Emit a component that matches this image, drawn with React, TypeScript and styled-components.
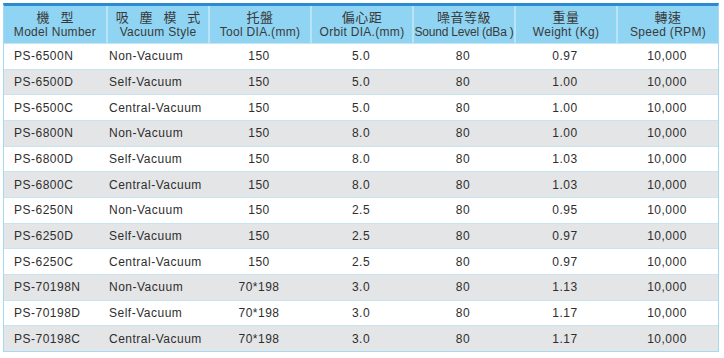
import React from "react";
import styled, { createGlobalStyle } from "styled-components";

const GlobalStyle = createGlobalStyle`
  body {
    margin: 0;
    background: #ffffff;
    font-family: "Liberation Sans", Arial, sans-serif;
  }
`;

const Page = styled.div`
  padding: 3px 0 0 3px;
`;

const Table = styled.div`
  width: 716px;
  box-sizing: border-box;
  border-top: 3px solid #2b8bd2;
  border-left: 1px solid #a4daf2;
  border-right: 1px solid #a4daf2;
  border-bottom: 1px solid #a4daf2;
`;

const Row = styled.div<{ $shade?: boolean }>`
  display: grid;
  grid-template-columns: repeat(7, 1fr);
  height: 25.67px;
  align-items: center;
  background: ${(p) => (p.$shade ? "#e4e5e7" : "#ffffff")};
  border-top: 1px solid #c9e4f1;
  box-sizing: border-box;
  color: #2e2e2e;
  font-size: 12px;
  letter-spacing: 0.5px;
`;

const HeadRow = styled.div`
  display: grid;
  grid-template-columns: repeat(7, 1fr);
  height: 37px;
  background: #8fd4f3;
`;

const HeadCell = styled.div`
  display: flex;
  flex-direction: column;
  align-items: center;
  justify-content: center;
  border-left: 2px solid #b9e4f7;
  color: #3a3a3a;
  white-space: nowrap;
  &:first-child {
    border-left: none;
  }
`;

const Zh = styled.span<{ $wide?: boolean }>`
  display: block;
  height: 16px;
  line-height: 16px;
  font-family: "Noto Sans CJK TC", "Noto Sans CJK SC", sans-serif;
  font-size: 13px;
  letter-spacing: ${(p) => (p.$wide ? "4px" : "0.5px")};
  margin-right: ${(p) => (p.$wide ? "-4px" : "0")};
`;

const En = styled.span<{ $tight?: boolean }>`
  display: block;
  height: 15px;
  line-height: 15px;
  font-size: 12px;
  letter-spacing: ${(p) => (p.$tight ? "-0.2px" : "0.3px")};
`;

const Cell = styled.div<{ $pad?: number }>`
  white-space: nowrap;
  text-align: ${(p) => (p.$pad !== undefined ? "left" : "center")};
  padding-left: ${(p) => p.$pad ?? 0}px;
`;

const heads = [
  { zh: "機 型", en: "Model Number", wide: true },
  { zh: "吸 塵 模 式", en: "Vacuum Style", wide: true },
  { zh: "托盤", en: "Tool DIA.(mm)" },
  { zh: "偏心距", en: "Orbit DIA.(mm)" },
  { zh: "噪音等級", en: "Sound Level (dBa )", tight: true },
  { zh: "重量", en: "Weight (Kg)" },
  { zh: "轉速", en: "Speed (RPM)" },
];

const rows = [
  ["PS-6500N", "Non-Vacuum", "150", "5.0", "80", "0.97", "10,000"],
  ["PS-6500D", "Self-Vacuum", "150", "5.0", "80", "1.00", "10,000"],
  ["PS-6500C", "Central-Vacuum", "150", "5.0", "80", "1.00", "10,000"],
  ["PS-6800N", "Non-Vacuum", "150", "8.0", "80", "1.00", "10,000"],
  ["PS-6800D", "Self-Vacuum", "150", "8.0", "80", "1.03", "10,000"],
  ["PS-6800C", "Central-Vacuum", "150", "8.0", "80", "1.03", "10,000"],
  ["PS-6250N", "Non-Vacuum", "150", "2.5", "80", "0.95", "10,000"],
  ["PS-6250D", "Self-Vacuum", "150", "2.5", "80", "0.97", "10,000"],
  ["PS-6250C", "Central-Vacuum", "150", "2.5", "80", "0.97", "10,000"],
  ["PS-70198N", "Non-Vacuum", "70*198", "3.0", "80", "1.13", "10,000"],
  ["PS-70198D", "Self-Vacuum", "70*198", "3.0", "80", "1.17", "10,000"],
  ["PS-70198C", "Central-Vacuum", "70*198", "3.0", "80", "1.17", "10,000"],
];

const pads = [10, 3];

export default function App() {
  return (
    <Page>
      <GlobalStyle />
      <Table>
        <HeadRow>
          {heads.map((h) => (
            <HeadCell key={h.en}>
              <Zh $wide={h.wide}>{h.zh}</Zh>
              <En $tight={h.tight}>{h.en}</En>
            </HeadCell>
          ))}
        </HeadRow>
        {rows.map((r, i) => (
          <Row key={r[0]} $shade={i % 2 === 1}>
            {r.map((v, j) => (
              <Cell key={j} $pad={pads[j]}>
                {v}
              </Cell>
            ))}
          </Row>
        ))}
      </Table>
    </Page>
  );
}
